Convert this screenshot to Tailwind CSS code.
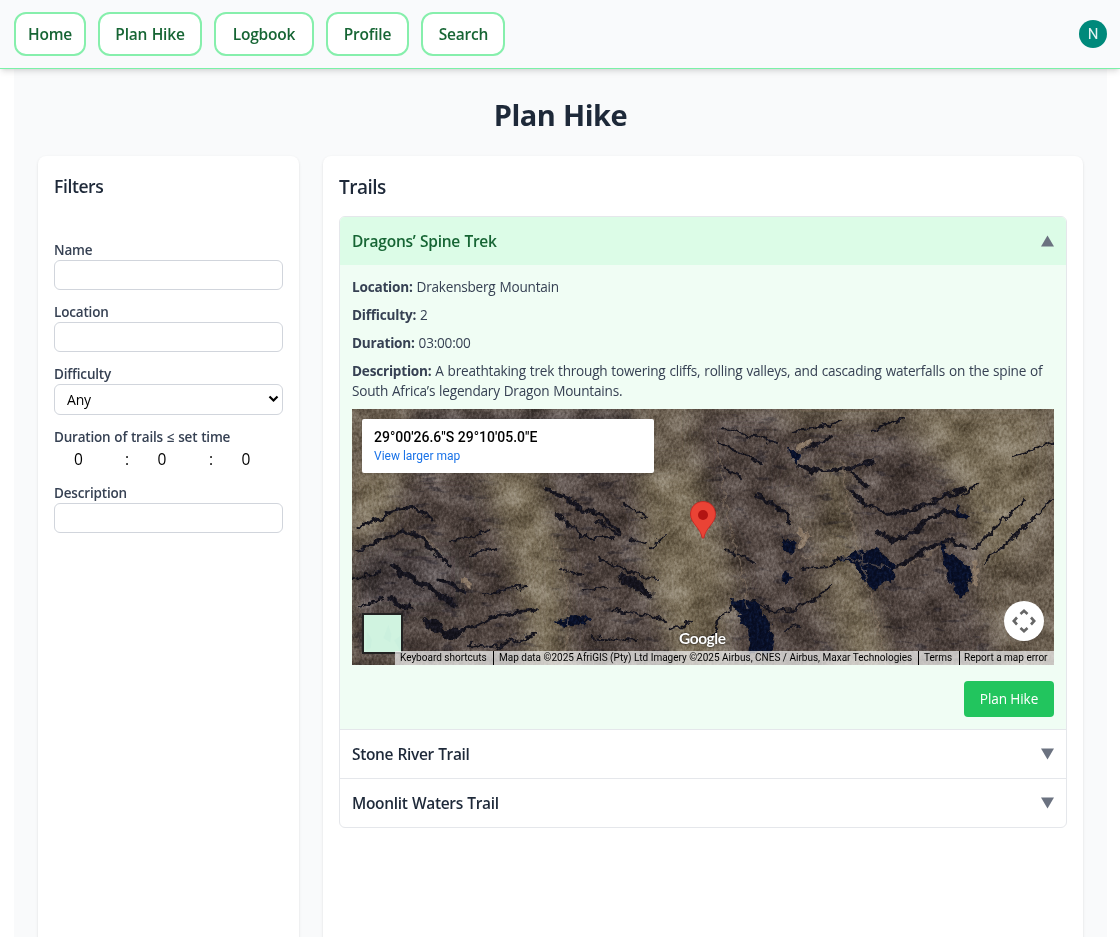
<!DOCTYPE html>
<html lang="en">
<head>
<meta charset="utf-8">
<title>Plan Hike</title>
<script src="https://cdn.jsdelivr.net/npm/@tailwindcss/browser@4"></script>
</head>
<body class="h-screen overflow-hidden bg-white font-['Open_Sans','Noto_Sans',sans-serif] text-gray-800 whitespace-nowrap [word-spacing:0.6px]">
<header class="relative z-10 flex h-[69px] items-center justify-between border-b border-green-300 bg-[#f9fafc] pl-3.5 pr-[13px] shadow-md">
  <nav class="flex gap-3 text-[15.5px] font-semibold text-[#166534] tracking-[-0.2px]">
    <a class="flex h-11 w-[72px] items-center justify-center rounded-xl border-2 border-[#86efac] bg-white pt-0.5">Home</a>
    <a class="flex h-11 w-[104px] items-center justify-center rounded-xl border-2 border-[#86efac] bg-white pt-0.5">Plan Hike</a>
    <a class="flex h-11 w-[100px] items-center justify-center rounded-xl border-2 border-[#86efac] bg-white pt-0.5">Logbook</a>
    <a class="flex h-11 w-[83px] items-center justify-center rounded-xl border-2 border-[#86efac] bg-white pt-0.5">Profile</a>
    <a class="flex h-11 w-[84px] items-center justify-center rounded-xl border-2 border-[#86efac] bg-white pt-0.5 pl-px">Search</a>
  </nav>
  <div class="flex size-7 items-center justify-center rounded-full bg-[#00897b] font-['Roboto',sans-serif] text-[15px] text-white/90">N</div>
</header>
<main class="ml-3.5 mr-[13px] flex h-[900px] flex-col bg-[#f9fafb] px-6 pt-7">
  <h1 class="mb-[23px] text-center text-[29px] leading-9 font-bold tracking-[-0.5px]">Plan Hike</h1>
  <div class="flex grow gap-6">
    <aside class="flex w-[261px] shrink-0 flex-col rounded-lg bg-white p-4 text-sm shadow">
      <h2 class="mb-10 text-[17.5px] leading-7 font-semibold tracking-[-0.4px]">Filters</h2>
      <div class="flex flex-col gap-3 text-[13.5px] leading-5 font-semibold text-gray-700">
        <label class="block tracking-[-0.17px]">Name<span class="block h-[30px] rounded-md border border-gray-300 bg-white"></span></label>
        <label class="block tracking-[-0.17px]">Location<span class="block h-[30px] rounded-md border border-gray-300 bg-white"></span></label>
        <label class="block tracking-[-0.17px]">Difficulty
          <span class="flex h-[31px] items-center justify-between rounded-md border border-gray-300 bg-white pt-px pr-[3px] pl-3 text-sm font-normal text-black">Any
            <svg class="mb-0.5" width="11" height="8" viewBox="0 0 11 8" fill="none" stroke="#000" stroke-width="2.200"><path d="M1.500 1.500 5.500 5.500 9.500 1.500"/></svg>
          </span></label>
        <div><div class="tracking-[-0.2px]">Duration of trails ≤ set time</div>
          <div class="flex h-6 items-center text-[15.5px] font-normal text-black">
            <span class="mr-[9px] w-[49px] text-center">0</span><span class="w-[30px] text-center">:</span><span class="w-10 text-center">0</span><span class="w-[58px] text-center">:</span><span class="w-3 text-center">0</span>
          </div></div>
        <label class="block tracking-[-0.17px]">Description<span class="block h-[30px] rounded-md border border-gray-300 bg-white"></span></label>
      </div>
    </aside>
    <section class="w-[760px] rounded-lg bg-white p-4 shadow">
      <h2 class="mb-[15px] pt-px text-[19px] leading-7 font-semibold tracking-[-0.5px]">Trails</h2>
      <ul class="overflow-hidden rounded-md border border-gray-200 text-[15.5px]">
        <li class="border-b border-gray-200 bg-[#f0fdf4]">
          <div class="flex h-12 items-center justify-between bg-[#dcfce7] px-3 font-semibold tracking-[-0.24px] text-[#166534]"><span class="pt-0.5">Dragons’ Spine Trek</span>
            <svg width="13" height="12" viewBox="0 0 13 12" fill="#6b7280"><path d="M6.5 .5 13 11.500H0z"/></svg></div>
          <div class="flex flex-col gap-2 p-3 text-[13.6px] leading-5 text-gray-700">
            <p class="tracking-[-0.22px]"><b>Location:</b> Drakensberg Mountain</p>
            <p class="tracking-[-0.22px]"><b>Difficulty:</b> 2</p>
            <p class="tracking-[-0.22px]"><b>Duration:</b> 03:00:00</p>
            <p class="tracking-[-0.22px]"><b>Description:</b> A breathtaking trek through towering cliffs, rolling valleys, and cascading waterfalls on the spine of<br>South Africa’s legendary Dragon Mountains.</p>
            <div class="relative h-64 w-[702px] overflow-hidden bg-[#5c5148] font-['Roboto',sans-serif] [word-spacing:0]">
              <svg class="absolute inset-0" width="702" height="256" viewBox="0 0 702 256">
                <defs>
                  <filter id="soft" x="-20%" y="-20%" width="140%" height="140%"><feGaussianBlur stdDeviation="10"/></filter>
                  <filter id="rough" filterUnits="userSpaceOnUse" x="0" y="0" width="702" height="256" color-interpolation-filters="sRGB"><feTurbulence type="fractalNoise" baseFrequency=".11" numOctaves="4" seed="4" result="n"/><feDisplacementMap in="SourceGraphic" in2="n" scale="10" xChannelSelector="R" yChannelSelector="G"/><feGaussianBlur stdDeviation=".45"/></filter>
                  <filter id="grain" filterUnits="userSpaceOnUse" x="0" y="0" width="702" height="256" color-interpolation-filters="sRGB"><feTurbulence type="fractalNoise" baseFrequency=".4 .3" numOctaves="3" seed="9"/><feColorMatrix values="1 0 0 0 0  1 0 0 0 0  1 0 0 0 0  0 0 0 0 1"/></filter>
                  <filter id="patch" filterUnits="userSpaceOnUse" x="0" y="0" width="702" height="256" color-interpolation-filters="sRGB"><feTurbulence type="fractalNoise" baseFrequency=".03 .04" numOctaves="4" seed="21"/><feColorMatrix values="1 0 0 0 0  1 0 0 0 0  1 0 0 0 0  0 0 0 0 1"/></filter>
                  <filter id="crags" filterUnits="userSpaceOnUse" x="0" y="0" width="702" height="256" color-interpolation-filters="sRGB"><feTurbulence type="fractalNoise" baseFrequency=".045 .13" numOctaves="3" seed="33"/><feColorMatrix values="0 0 0 0 .1  0 0 0 0 .09  0 0 0 0 .13  9 0 0 0 -5.500"/></filter>
                  <g id="shade"><path d="M55 60 130 60 155 150 190 256H0V190L25 130zM190 0H275L300 100 290 160 325 256H215L195 120zM345 0H430L440 110 465 150 455 190 500 256H372L390 170 355 90zM430 20H545L640 110 620 190 650 256H540L500 150 445 90z"/></g>
                  <mask id="shadeMask"><use href="#shade" fill="#fff" filter="url(#soft)"/></mask>
                </defs>
                <path fill="#6c6051" d="M0 0h702v256H0z"/>
                <g filter="url(#soft)">
                  <use href="#shade" fill="#524742"/>
                  <path fill="#7c6f5a" d="M135 60 185 60 210 150 213 256H180L165 160zM285 60 345 60 370 160 360 256H325L300 170zM560 0H690V90L640 170 600 60zM0 60 45 60 40 110 0 125zM470 60 490 60 500 140 535 256H500L485 170z"/>
                  <path fill="#4b4242" d="M60 0H280V40H60zM0 140H110V200H0z"/>
                </g>
                <path fill="#000" filter="url(#patch)" class="opacity-80 mix-blend-soft-light" d="M0 0h702v256H0z"/>
                <g mask="url(#shadeMask)"><path filter="url(#crags)" opacity=".4" d="M0 0h702v256H0z"/></g>
                <g filter="url(#rough)" fill="none" stroke="#14131c" stroke-width="2.200" stroke-linecap="round" stroke-linejoin="round">
                  <path d="M8 118 28 110 45 100 62 98 80 112" stroke-width="3"/>
                  <path d="M5 142 30 131 50 122 68 127 85 145 98 158" stroke-width="3.500"/>
                  <path d="M42 158 60 170 80 181 104 196" stroke-width="6"/><path d="M38 190 58 200M88 170 112 183" stroke-width="5"/>
                  <path d="M74 210 94 226 124 216 150 205 184 201" stroke-width="3.500"/><path d="M74 212 98 227 104 225" stroke-width="8"/>
                  <path d="M118 236 140 238 185 225M0 170 30 162M8 198 30 190M98 131 116 130 136 120M118 146 142 138M131 187 152 180 176 178"/>
                  <path d="M195 82 212 86 228 100 246 104 268 124" stroke-width="4"/><path d="M205 105 230 128 262 128M208 160 230 166M245 112 268 128M270 95 292 108M280 130 294 134M298 140 312 128M248 150 285 165 306 170"/>
                  <path d="M270 168 283 174 296 186" stroke-width="9"/><path d="M262 200 285 205 312 210M318 222 340 212M232 180 254 178M240 228 285 232"/>
                  <path d="M370 20 405 28 425 34M368 34 392 46 412 56M372 58 390 70M440 25 460 20 488 12M455 40 480 26M520 22 550 10" />
                  <path d="M447 57 465 62 490 60 520 54M500 63 515 78M498 82 515 96 537 105 565 100 588 88 612 80" stroke-width="3.500"/>
                  <path d="M527 124 540 131 555 128 572 114 592 102 612 108" stroke-width="4.500"/>
                  <path d="M545 160 572 142 595 130 615 140" stroke-width="4"/><path d="M623 140 640 122 655 108 672 90M633 152 660 130 680 110 702 90M612 84 625 76M662 48 702 34"/>
                  <path d="M405 86 425 98 440 113" stroke-width="4"/><path d="M374 143 392 148 402 154M450 160 475 158 490 150M362 225 368 208 382 195 402 192 420 202 442 200 460 192 480 178M432 222 450 215"/>
                </g>
                <g filter="url(#rough)" fill="#080f27">
                  <path d="M488 150 505 141 525 140 544 157 540 169 522 180 508 168 502 155z"/>
                  <path d="M588 128 596 143 609 151 620 163 616 180 607 190 600 176 592 155z"/>
                  <path d="M378 190 405 192 412 208 424 228 420 244 398 244 396 220 386 205z"/>
                  <path d="M200 214 220 206 238 208 232 215 210 217zM432 128 446 138 440 144 432 142zM432 160 441 170 435 174 430 168zM603 98 618 106 614 113 605 106zM436 38 448 44 444 56 438 50z"/>
                </g>
                <g filter="url(#rough)" fill="none" stroke="#8b7967" stroke-width="1.500"><path d="M110 170 120 178M446 120 454 128 448 137M446 38 460 32M622 150 625 165 620 178" stroke-width="5"/><path d="M201 125 211 165 216 210 214 256M365 30 372 90 390 165 396 200M490 50 495 95 520 190 535 256M70 125 90 145M450 148 475 145 540 160M550 160 588 138" opacity=".5"/></g>
                <path fill="#000" filter="url(#grain)" class="opacity-60 mix-blend-soft-light" d="M0 0h702v256H0z"/>
              </svg>
              <div class="absolute top-2.5 left-2.5 h-[54px] w-[292px] rounded-[2px] bg-white px-3 pt-[9px] shadow-sm">
                <div class="text-sm leading-[18px] font-medium text-black">29°00'26.6"S 29°10'05.0"E</div>
                <div class="text-xs leading-5 text-[#1a73e8]">View larger map</div>
              </div>
              <svg class="absolute top-[92px] left-[338px]" width="26" height="38" viewBox="0 0 26 38"><path fill="#ea4335" stroke="#c5221f" stroke-width=".8" d="M13 .5C6 .5.500 6 .5 13c0 5 2.600 8 5.500 12 3 4 5 6.500 6 11.500.2 1 1.800 1 2 0 1-5 3-7.500 6-11.500 2.900-4 5.500-7 5.500-12C25.500 6 20 .5 13 .5z"/><circle cx="13" cy="14" r="5" fill="#b31412"/></svg>
              <div class="absolute top-[204px] left-2.5 size-[41px] border-2 border-[#222] bg-[#d0f3e0]"><svg width="37" height="37" viewBox="0 0 38 38" fill="#cbf0de"><path d="M3 17 8 25 7 34 2 36zM25 10 28 20 27 28 20 24zM31 26 38 21V38z"/></svg></div>
              <div class="absolute top-[218px] left-[327px] font-['Lato',sans-serif] text-[15.500px] leading-[22px] font-bold tracking-[-0.45px] text-white [text-shadow:0_0_2px_#000]">Google</div>
              <div class="absolute right-2.5 bottom-6 flex size-10 items-center justify-center rounded-full bg-white shadow"><svg width="24" height="24" viewBox="0 0 24 24" fill="none" stroke="#666" stroke-width="2.600"><path d="M8.500 5 12 1.800 15.500 5M8.500 19 12 22.200 15.500 19M5 8.500 1.800 12 5 15.500M19 8.500 22.200 12 19 15.500"/></svg></div>
              <div class="absolute right-0 bottom-0 flex h-3.5 text-[10px] leading-[14px] text-black">
                <span class="w-[98px] bg-[#f5f5f5]/70 pl-[5px]">Keyboard shortcuts</span>
                <span class="w-[425px] border-l border-black bg-[#f5f5f5]/70 pl-[5px]">Map data ©2025 AfriGIS (Pty) Ltd Imagery ©2025 Airbus, CNES / Airbus, Maxar Technologies</span>
                <span class="w-[41px] border-l border-black bg-[#f5f5f5]/70 pl-[5px]">Terms</span>
                <span class="w-[95px] border-l border-black bg-[#f5f5f5]/70 pl-[4px]">Report a map error</span>
              </div>
            </div>
            <button class="mt-2 h-9 w-[90px] self-end rounded bg-[#22c55e] tracking-[-0.1px] text-white">Plan Hike</button>
          </div>
        </li>
        <li class="flex h-[49px] items-center justify-between border-b border-gray-200 px-3 font-semibold tracking-[-0.34px]"><span class="pt-0.5">Stone River Trail</span><svg width="13" height="12" viewBox="0 0 13 12" fill="#6b7280"><path d="M0 .5H13L6.500 11.500z"/></svg></li>
        <li class="flex h-12 items-center justify-between px-3 font-semibold tracking-[-0.32px]"><span class="pt-0.5">Moonlit Waters Trail</span><svg width="13" height="12" viewBox="0 0 13 12" fill="#6b7280"><path d="M0 .5H13L6.500 11.500z"/></svg></li>
      </ul>
    </section>
  </div>
</main>
</body>
</html>
